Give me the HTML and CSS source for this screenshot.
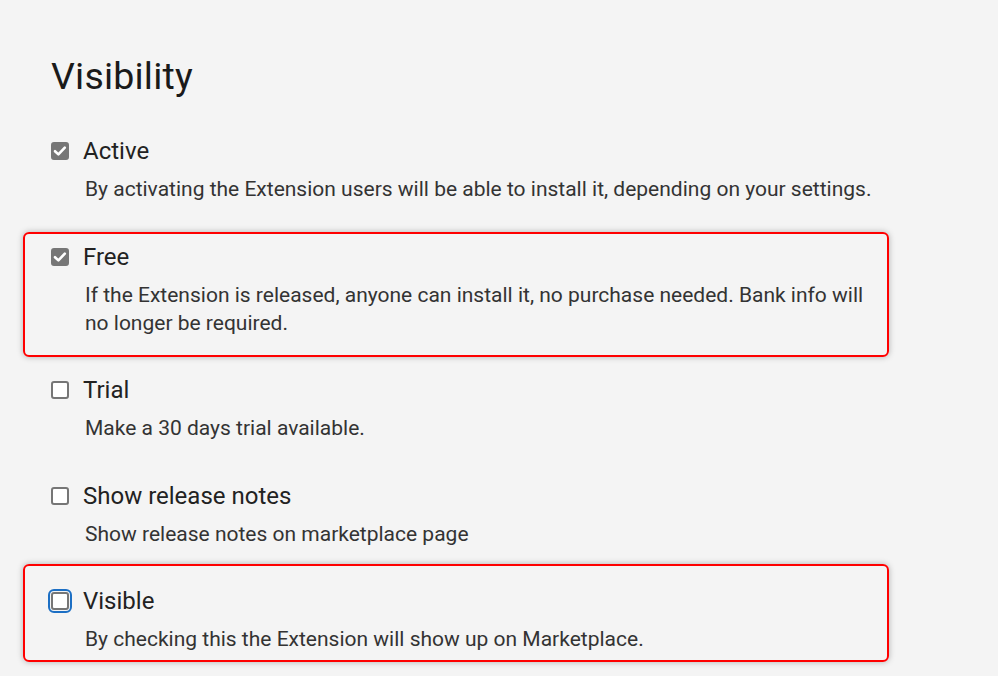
FILE: index.html
```html
<!DOCTYPE html>
<html lang="en">
<head>
<meta charset="utf-8">
<title>Visibility</title>
<link rel="stylesheet" href="styles.css">
</head>
<body>
<main class="page">
  <h1 class="title">Visibility</h1>
  <div class="list">
    <div class="item">
      <div class="row">
        <span class="box checked"><svg viewBox="0 0 18 18" width="18" height="18"><path d="M4 9.2 L7.4 12.4 L13.8 5.6" fill="none" stroke="#fff" stroke-width="2.6" stroke-linecap="round" stroke-linejoin="round"/></svg></span>
        <span class="label">Active</span>
      </div>
      <p class="desc">By activating the Extension users will be able to install it, depending on your settings.</p>
    </div>
    <div class="item hl hl-free">
      <div class="row">
        <span class="box checked"><svg viewBox="0 0 18 18" width="18" height="18"><path d="M4 9.2 L7.4 12.4 L13.8 5.6" fill="none" stroke="#fff" stroke-width="2.6" stroke-linecap="round" stroke-linejoin="round"/></svg></span>
        <span class="label">Free</span>
      </div>
      <p class="desc">If the Extension is released, anyone can install it, no purchase needed. Bank info will no longer be required.</p>
    </div>
    <div class="item">
      <div class="row">
        <span class="box"></span>
        <span class="label">Trial</span>
      </div>
      <p class="desc">Make a 30 days trial available.</p>
    </div>
    <div class="item">
      <div class="row">
        <span class="box"></span>
        <span class="label">Show release notes</span>
      </div>
      <p class="desc">Show release notes on marketplace page</p>
    </div>
    <div class="item hl hl-visible">
      <div class="row">
        <span class="box focus"></span>
        <span class="label">Visible</span>
      </div>
      <p class="desc">By checking this the Extension will show up on Marketplace.</p>
    </div>
  </div>
</main>
</body>
</html>
```

FILE: styles.css
```css
html, body {
  margin: 0;
  padding: 0;
  background: #f4f4f4;
  font-family: Roboto, "Liberation Sans", sans-serif;
  color: #222;
}

.page {
  padding: 54px 0 40px 51px;
}

.title {
  margin: 0;
  font-size: 37.5px;
  line-height: 44px;
  font-weight: 400;
  color: #1a1a1a;
  letter-spacing: 0.2px;
}

.list {
  margin-top: 38px;
  width: 810px;
  display: flex;
  flex-direction: column;
  gap: 38.5px;
}

.item {
  display: flex;
  flex-direction: column;
}

.row {
  display: flex;
  align-items: center;
  gap: 14px;
  height: 30px;
}

.label {
  font-size: 24px;
  line-height: 30px;
  color: #222;
}

.box {
  width: 18px;
  height: 18px;
  box-sizing: border-box;
  border: 2px solid #767676;
  border-radius: 3px;
  background: #fff;
  display: flex;
  align-items: center;
  justify-content: center;
  flex: none;
}

.box.checked {
  background: #767676;
  border-color: #767676;
}

.box.checked svg {
  margin: -2px;
  flex: none;
}

.box.focus {
  outline: 2px solid #1c6fc4;
  outline-offset: 1px;
}

.desc {
  margin: 9px -20px 0 34px;
  font-size: 21px;
  line-height: 28px;
  color: #333;
}

.hl {
  border: 2px solid #ff0000;
  border-radius: 6px;
  box-shadow: 0 0 6px rgba(0, 0, 0, 0.28);
  margin-left: -28px;
  margin-right: -28px;
  padding-left: 26px;
  padding-right: 26px;
}

.hl-free {
  margin-top: -10px;
  padding-top: 8px;
  margin-bottom: -20px;
  padding-bottom: 18px;
}

.hl-visible {
  margin-top: -22px;
  padding-top: 20px;
  margin-bottom: -9px;
  padding-bottom: 7px;
}
```
